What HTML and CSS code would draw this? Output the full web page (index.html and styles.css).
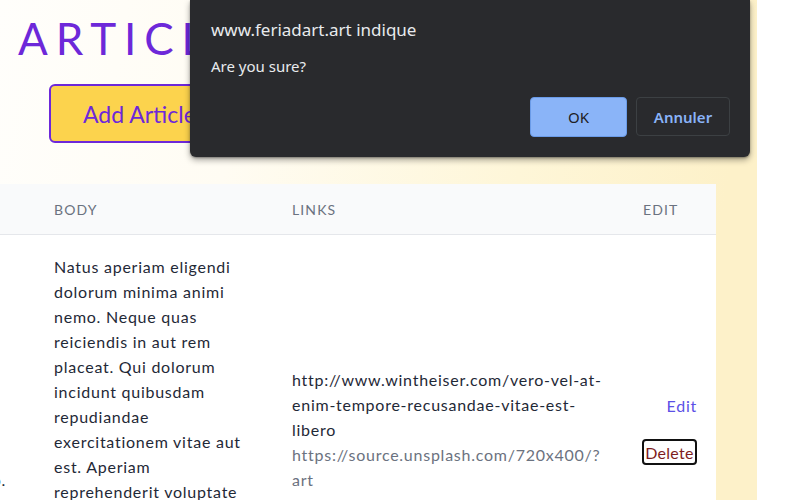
FILE: index.html
```html
<!DOCTYPE html>
<html lang="fr">
<head>
<meta charset="utf-8">
<title>Articles</title>
<link rel="stylesheet" href="styles.css">
</head>
<body>
<div class="page">
  <header class="top">
    <h1 class="title">ARTICLES</h1>
    <div class="actions">
      <button class="add-btn">Add Article</button>
    </div>
  </header>

  <div class="table-wrap">
    <table class="articles">
      <colgroup>
        <col class="c-title">
        <col class="c-body">
        <col class="c-links">
        <col class="c-edit">
      </colgroup>
      <thead>
        <tr>
          <th>Title</th>
          <th>Body</th>
          <th>Links</th>
          <th class="edit-head">Edit</th>
        </tr>
      </thead>
      <tbody>
        <tr>
          <td class="title-cell">
            <div class="title-box">
              <span class="tl">Voluptas</span>
              <span class="tl">laudantium</span>
              <span class="tl">et</span>
              <span class="tl">quia</span>
              <span class="tl last">sed quo.</span>
            </div>
          </td>
          <td class="body-cell">Natus aperiam eligendi dolorum minima animi nemo. Neque quas reiciendis in aut rem placeat. Qui dolorum incidunt quibusdam repudiandae exercitationem vitae aut est. Aperiam reprehenderit voluptate quia sed at sint. Dolores ut quo molestiae voluptas laborum et. Sit quia omnis dolorem et.</td>
          <td class="links-cell">
            <div class="link-main">http://www.wintheiser.com/vero-vel-at-enim-tempore-recusandae-vitae-est-libero</div>
            <div class="link-img">https://source.unsplash.com/720x400/?art</div>
          </td>
          <td class="edit-cell">
            <div class="edit-box">
              <a class="edit-link" href="#">Edit</a>
              <button class="delete-btn">Delete</button>
            </div>
          </td>
        </tr>
      </tbody>
    </table>
  </div>

  <div class="dialog" role="dialog">
    <div class="dlg-title">www.feriadart.art indique</div>
    <div class="dlg-msg">Are you sure?</div>
    <div class="dlg-buttons">
      <button class="dlg-ok">OK</button>
      <button class="dlg-cancel">Annuler</button>
    </div>
  </div>
</div>
</body>
</html>
```

FILE: styles.css
```css
html, body {
  margin: 0;
  padding: 0;
  background: #ffffff;
}

.page {
  position: relative;
  width: 757px;
  height: 500px;
  overflow: hidden;
  background: linear-gradient(100deg, #fffefb 0%, #fffcf3 30%, #fef6d8 65%, #fdf1c9 90%);
  font-family: "Lato", "Noto Sans", sans-serif;
  color: #1f2937;
}

.top {
  padding: 14px 0 0 18px;
}

.title {
  margin: 0;
  font-size: 44px;
  line-height: 48px;
  font-weight: 400;
  letter-spacing: 0.18em;
  color: #6d28d9;
}

.actions {
  padding: 22px 0 0 31px;
}

.add-btn {
  height: 59px;
  padding: 0 32px;
  background: #fcd34d;
  border: 2px solid #6d28d9;
  border-radius: 6px;
  font-family: inherit;
  font-size: 23px;
  color: #6d28d9;
}

.table-wrap {
  margin-top: 41px;
  width: 716px;
  overflow: hidden;
}

.articles {
  margin-left: -173px;
  table-layout: fixed;
  border-collapse: collapse;
  width: 889px;
  background: #ffffff;
}

.c-title { width: 203px; }
.c-body { width: 238px; }
.c-links { width: 366px; }
.c-edit { width: 82px; }

.articles thead th {
  height: 50px;
  padding: 0 24px;
  background: #f9fafb;
  border-bottom: 1px solid #e5e7eb;
  text-align: left;
  font-size: 14px;
  font-weight: 400;
  color: #6b7280;
  letter-spacing: 0.08em;
  text-transform: uppercase;
}

.articles thead th.edit-head {
  padding-left: 9px;
  padding-right: 0;
}

.articles tbody td {
  padding: 19px 24px;
  font-size: 16px;
  line-height: 25px;
  letter-spacing: 0.75px;
  vertical-align: middle;
}

.title-cell .title-box {
  width: 155px;
}

.tl {
  display: block;
}

.tl.last {
  text-align: right;
}

.articles tbody td.body-cell {
  vertical-align: top;
  padding-right: 20px;
  color: #1f2937;
}

.articles tbody td.links-cell {
  padding-right: 29px;
}

.link-main {
  color: #1f2937;
}

.link-img {
  color: #6b7280;
}

.articles tbody td.edit-cell {
  padding-right: 19px;
  padding-left: 8px;
}

.edit-box {
  display: flex;
  flex-direction: column;
  align-items: flex-end;
  gap: 21px;
}

.edit-link {
  color: #5b50e6;
  text-decoration: none;
  line-height: 25px;
}

.delete-btn {
  padding: 0;
  height: 26px;
  width: 55px;
  background: #ffffff;
  border: 2px solid #111111;
  border-radius: 4px;
  font-family: inherit;
  font-size: 16px;
  letter-spacing: 0.3px;
  color: #7f1d1d;
}

/* Browser confirm dialog */
.dialog {
  position: absolute;
  top: 0;
  left: 190px;
  width: 560px;
  height: 157px;
  box-sizing: border-box;
  padding: 18px 20px 0 21px;
  background: #292a2d;
  border-radius: 0 0 6px 6px;
  box-shadow: 0 3px 6px rgba(0, 0, 0, 0.35), 0 1px 2px rgba(0, 0, 0, 0.3);
  font-family: "Noto Sans", "Open Sans", sans-serif;
  color: #e8eaed;
}

.dlg-title {
  font-size: 17px;
  line-height: 24px;
}

.dlg-msg {
  margin-top: 13px;
  font-size: 15px;
  line-height: 22px;
}

.dlg-buttons {
  display: flex;
  justify-content: flex-end;
  gap: 9px;
  margin-top: 20px;
}

.dlg-ok {
  width: 97px;
  height: 40px;
  background: #8ab4f8;
  border: 1px solid #6a9be8;
  border-radius: 4px;
  font-family: inherit;
  font-size: 15px;
  color: #202124;
}

.dlg-cancel {
  width: 94px;
  height: 39px;
  background: transparent;
  border: 1px solid #3c4043;
  border-radius: 4px;
  font-family: inherit;
  font-size: 15px;
  font-weight: 600;
  color: #8ab4f8;
}
```
